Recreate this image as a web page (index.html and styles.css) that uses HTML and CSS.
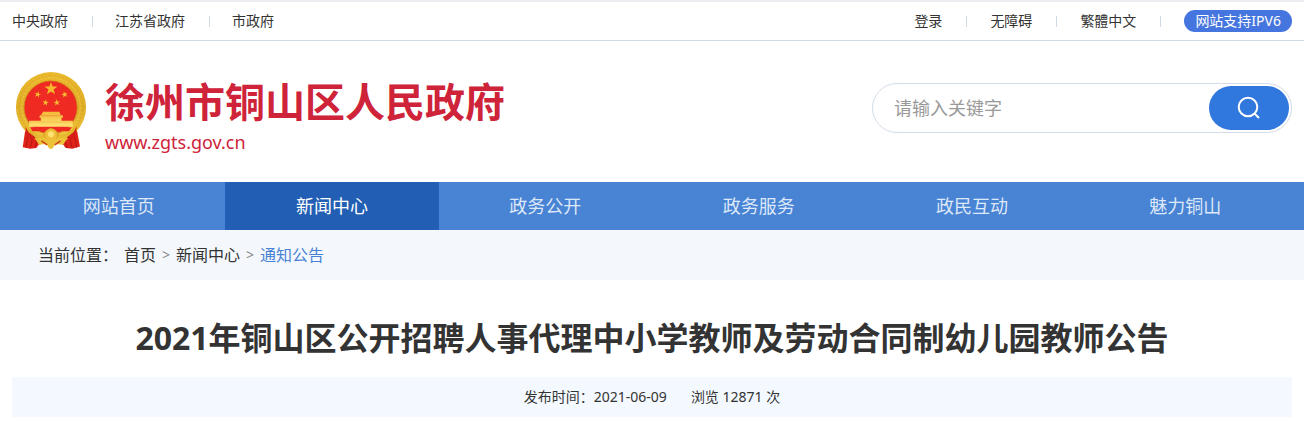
FILE: index.html
```html
<!DOCTYPE html>
<html lang="zh-CN">
<head>
<meta charset="utf-8">
<meta name="viewport" content="width=device-width, initial-scale=1">
<title>徐州市铜山区人民政府</title>
<link rel="stylesheet" href="styles.css">
</head>
<body>
<div class="topbar">
  <nav class="topbar-group">
    <a href="#">中央政府</a>
    <a href="#">江苏省政府</a>
    <a href="#">市政府</a>
  </nav>
  <nav class="topbar-group topbar-tools">
    <a href="#">登录</a>
    <a href="#">无障碍</a>
    <a href="#">繁體中文</a>
    <a class="ipv6" href="#"><span class="ipv6-pill">网站支持IPV6</span></a>
  </nav>
</div>

<header class="header">
  <a class="brand" href="#">
    <svg class="emblem" viewBox="48 37 206 226" aria-hidden="true">
      <defs>
        <linearGradient id="gold" x1="0" y1="0" x2="0" y2="1">
          <stop offset="0" stop-color="#ebb92c"/>
          <stop offset="0.5" stop-color="#dfad27"/>
          <stop offset="1" stop-color="#efc43a"/>
        </linearGradient>
        <linearGradient id="light" x1="0" y1="0" x2="0" y2="1">
          <stop offset="0" stop-color="#f3bb38"/>
          <stop offset="1" stop-color="#ffe173"/>
        </linearGradient>
        <path id="star" d="M0-10 2.35-3.2 9.5-3.1 3.8 1.2 5.9 8.1 0 4-5.9 8.1-3.8 1.2-9.5-3.1-2.35-3.2Z"/>
      </defs>
      <path d="M77 196 68 258 90 262 108 260 128 232 174 232 194 260 214 262 236 256 225 196Z" fill="#df2319"/>
      <path d="M84 214 78 258M98 226 90 260M112 232 104 259M218 214 226 258M205 226 213 260M191 232 198 259" fill="none" stroke="#b91713" stroke-width="3"/>
      <circle cx="151" cy="140" r="103" fill="url(#gold)"/>
      <circle cx="151" cy="140" r="93" fill="none" stroke="#d29b20" stroke-width="2" stroke-dasharray="4 6"/>
      <circle cx="151" cy="140" r="86" fill="none" stroke="#f6d355" stroke-width="2" stroke-dasharray="6 5"/>
      <circle cx="150" cy="141" r="78" fill="#ef2a22" stroke="#c9911b" stroke-width="2"/>
      <g fill="#f4b92f">
        <use href="#star" transform="translate(151 86) scale(2)"/>
        <use href="#star" transform="translate(112 103) rotate(15)"/>
        <use href="#star" transform="translate(191 103) rotate(-15)"/>
        <use href="#star" transform="translate(135 127) rotate(8)"/>
        <use href="#star" transform="translate(168 127) rotate(-8)"/>
      </g>
      <path d="M128 154h48l3 9h-57zM119 164h66l2 6-5 1v9h33v18H87v-18h34v-9l-5-1z" fill="url(#light)"/>
      <path d="M121 168h63M88 184h126" stroke="#e2a72b" stroke-width="1"/>
      <path d="M78 188Q91 222 123 223L135 211 151 201 168 211 180 223Q211 221 225 188L230 202Q216 230 188 239L151 229 114 239Q87 230 74 203Z" fill="url(#gold)"/>
      <path d="M90 199h34l-8 12h-20zM178 199h34l-8 12h-19z" fill="#ee2a20"/>
      <path d="M76 198 85 214 106 229 99 236 79 228ZM226 198 217 214 197 229 204 236 224 228Z" fill="#d51e18"/>
      <circle cx="151" cy="222" r="19" fill="#efbd37" stroke="#b97f1b" stroke-width="2" stroke-dasharray="5 3"/>
      <circle cx="151" cy="220" r="9" fill="#ffe173"/>
      <path d="M106 235Q129 224 151 239 174 224 197 235L186 251Q170 246 162 252L155 262H146L140 252Q132 246 116 251Z" fill="#ecc238"/>
      <path d="M123 239 140 251M179 239 162 251" stroke="#cc401b" stroke-width="4"/>
    </svg>
    <span class="brand-text">
      <strong class="brand-name">徐州市铜山区人民政府</strong>
      <span class="brand-url">www.zgts.gov.cn</span>
    </span>
  </a>
  <form class="search" role="search">
    <input class="search-input" type="text" placeholder="请输入关键字" aria-label="请输入关键字">
    <button class="search-button" type="button" aria-label="搜索">
      <svg class="search-icon" viewBox="0 0 24 24" aria-hidden="true">
        <circle cx="11" cy="11" r="9.3"/>
        <path d="m17.5 17.5 4.5 4.5"/>
      </svg>
    </button>
  </form>
</header>

<nav class="mainnav">
  <a href="#">网站首页</a>
  <a class="active" href="#">新闻中心</a>
  <a href="#">政务公开</a>
  <a href="#">政务服务</a>
  <a href="#">政民互动</a>
  <a href="#">魅力铜山</a>
</nav>

<nav class="crumbs">
  <span>当前位置：</span>
  <a href="#">首页</a>
  <span class="crumb-sep">&gt;</span>
  <a href="#">新闻中心</a>
  <span class="crumb-sep">&gt;</span>
  <a class="current" href="#">通知公告</a>
</nav>

<main class="article">
  <h1 class="title">2021年铜山区公开招聘人事代理中小学教师及劳动合同制幼儿园教师公告</h1>
  <div class="meta">
    <span>发布时间：2021-06-09</span>
    <span>浏览 12871 次</span>
  </div>
</main>
</body>
</html>
```
FILE: styles.css
```css
* {
  box-sizing: border-box;
}

body {
  margin: 0;
  background: #fff;
  color: #333;
  font-family: "Noto Sans", "Noto Sans CJK SC", sans-serif;
  font-size: 14px;
}

a {
  color: inherit;
  text-decoration: none;
}

.topbar {
  display: flex;
  justify-content: space-between;
  height: 41px;
  padding: 0 12px;
  border-top: 2px solid #ececf1;
  border-bottom: 1px solid #d0d9e8;
}

.topbar-group {
  display: flex;
  align-items: center;
}

.topbar-group a {
  display: flex;
  align-items: center;
  line-height: 22px;
}

.topbar-group a + a::before {
  content: "";
  width: 1px;
  height: 11px;
  margin: 0 22px 0 24px;
  background: #d0d9e8;
}

.topbar-tools a + a::before {
  margin-right: 23px;
}

.ipv6-pill {
  padding: 0 11px;
  border-radius: 11px;
  background: #4575de;
  color: #fff;
}

.header {
  display: flex;
  align-items: flex-start;
  justify-content: space-between;
  padding: 31px 12px 30px;
}

.brand {
  display: flex;
  align-items: flex-start;
  gap: 18px;
  padding-left: 3px;
  color: #ce2339;
}

.emblem {
  width: 72px;
  height: 77px;
}

.brand-text {
  display: flex;
  flex-direction: column;
}

.brand-name {
  font-size: 40px;
  line-height: 60px;
}

.brand-url {
  font-size: 18px;
  line-height: 20px;
}

.search {
  display: flex;
  flex: 0 1 420px;
  height: 50px;
  margin-top: 11px;
  padding: 2px;
  border: 1px solid #d3dce8;
  border-radius: 25px;
}

.search-input {
  flex: 1;
  min-width: 0;
  padding: 0 19px;
  border: 0;
  outline: 0;
  background: transparent;
  color: #333;
  font: inherit;
  font-size: 18px;
}

.search-input::placeholder {
  color: #999;
  opacity: 1;
}

.search-button {
  display: flex;
  align-items: center;
  justify-content: center;
  width: 80px;
  padding: 0;
  border: 0;
  border-radius: 22px;
  background: #3078dd;
}

.search-icon {
  width: 24px;
  height: 24px;
  fill: none;
  stroke: #fff;
  stroke-width: 2;
}

.mainnav {
  display: flex;
  padding: 0 12px;
  background: #4983d4;
  color: #dde8f8;
  font-size: 18px;
  line-height: 48px;
  text-align: center;
}

.mainnav a {
  flex: 1;
}

.mainnav .active {
  background: #225fb4;
  color: #fff;
}

.crumbs {
  display: flex;
  gap: 6px;
  padding: 0 38px;
  background: #f4f8fd;
  font-size: 16px;
  line-height: 50px;
}

.crumb-sep {
  color: #888;
  font-size: 14px;
}

.crumbs .current {
  color: #4983d4;
}

.article {
  padding: 34px 12px 4px;
}

.title {
  margin: 0 0 15px;
  font-size: 32px;
  line-height: 48px;
  text-align: center;
}

.meta {
  display: flex;
  justify-content: center;
  gap: 24px;
  background: #f3f9fe;
  line-height: 40px;
}
```
